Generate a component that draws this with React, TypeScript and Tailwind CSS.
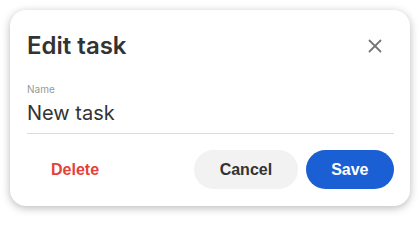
import React from 'react';
import { X } from 'lucide-react';

export default function App() {
  return (
    <div className="w-[420px] h-[216px] bg-white p-[10px]">
      <div className="h-[196px] bg-white rounded-2xl shadow-[0_2px_8px_rgba(0,0,0,0.28)] pl-[17px] pr-4 pt-[18px] pb-[17px] flex flex-col font-['Inter',sans-serif]">
        <div className="flex items-center justify-between h-9">
          <h2 className="text-2xl leading-8 font-semibold text-[#333]">Edit task</h2>
          <button className="w-8 h-9 mr-[3px] flex items-center justify-center text-[#777]">
            <X className="w-[22px] h-[22px]" strokeWidth={2} />
          </button>
        </div>

        <label className="mt-[18px] text-[10px] leading-[14px] text-[#999]">Name</label>
        <div className="mt-[3px] pb-[6px] border-b border-[#ddd]">
          <div className="text-xl leading-7 text-[#333]">New task</div>
        </div>

        <div className="mt-4 flex items-center font-['Liberation_Sans',Arial,sans-serif] font-bold text-base">
          <button className="h-[39px] px-6 rounded-full text-[#e5403a]">Delete</button>
          <div className="flex-1" />
          <button className="h-[39px] px-[25.5px] rounded-full bg-[#f2f2f2] text-[#333]">Cancel</button>
          <button className="h-[39px] px-[25.5px] ml-2 rounded-full bg-[#1a5fd4] text-white">Save</button>
        </div>
      </div>
    </div>
  );
}
